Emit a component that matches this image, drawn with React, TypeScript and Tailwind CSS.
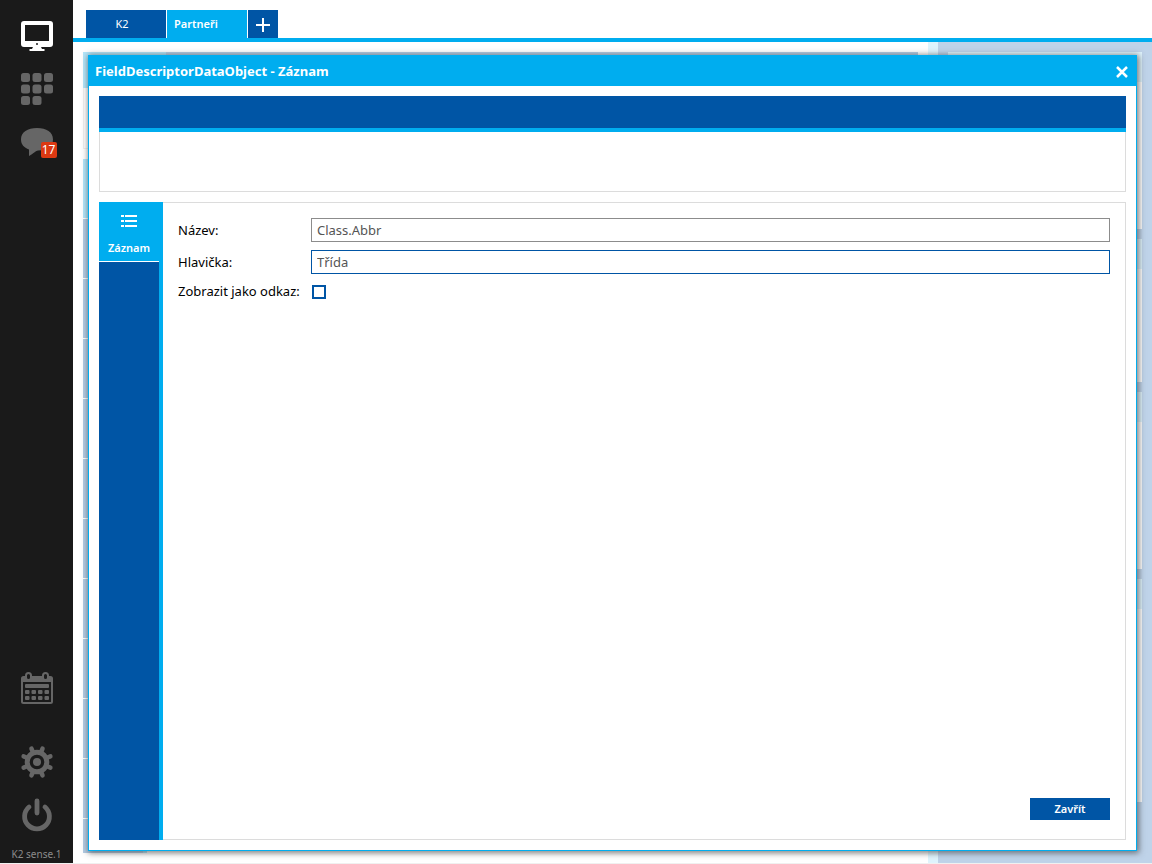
import { useState } from "react";

const LEFT_ROWS = 10;

function MonitorIcon() {
  return (
    <svg width="32" height="32" viewBox="0 0 32 32" fill="#fff" aria-hidden="true">
      <path fillRule="evenodd" d="M3 1h26a3 3 0 0 1 3 3v20a3 3 0 0 1-3 3h-9l1 2h2.500v2H8.500v-2H11l1-2H3a3 3 0 0 1-3-3V4a3 3 0 0 1 3-3zM4 5v16h24V5z" />
      <circle cx="16" cy="24" r="1" fill="#1a1a1a" />
    </svg>
  );
}

function GridIcon() {
  const cells = [[0, 0], [1, 0], [2, 0], [0, 1], [1, 1], [2, 1], [0, 2], [1, 2]];
  return (
    <svg width="32" height="32" viewBox="0 0 32 32" fill="#666" aria-hidden="true">
      {cells.map(([x, y]) => (
        <rect key={`${x}-${y}`} x={x * 11.5} y={y * 11.5} width="9" height="9" rx="2.500" />
      ))}
    </svg>
  );
}

function ChatIcon() {
  return (
    <svg width="32" height="32" viewBox="0 0 32 32" fill="#666" aria-hidden="true">
      <path d="M16 1c9.500 0 16 4 16 11.500S26 23 17 23.500c-2 .2-4 2.500-9 5.500v-6.500C3 20.500 0 17.500 0 12.500 0 5 6.500 1 16 1z" />
    </svg>
  );
}

function CalendarIcon() {
  return (
    <svg width="32" height="32" viewBox="0 0 32 32" aria-hidden="true">
      <rect x="1" y="5" width="30" height="26" rx="1.500" fill="none" stroke="#666" strokeWidth="2" />
      <path d="M1 5h30v5H1z" fill="#666" />
      <rect x="5" y="1" width="5" height="7" rx="2.500" fill="#1a1a1a" stroke="#666" strokeWidth="2" />
      <rect x="22" y="1" width="5" height="7" rx="2.500" fill="#1a1a1a" stroke="#666" strokeWidth="2" />
      <rect x="4" y="12" width="24" height="4" rx="1" fill="#666" />
      {[4, 10.5, 17, 23.5].map((x) => (
        <g key={x} fill="#666">
          <rect x={x} y="18" width="4.500" height="4" rx="1" />
          <rect x={x} y="24" width="4.500" height="4" rx="1" />
        </g>
      ))}
    </svg>
  );
}

function GearIcon() {
  return (
    <svg width="34" height="34" viewBox="-17 -17 34 34" aria-hidden="true">
      <circle r="9.800" fill="none" stroke="#666" strokeWidth="5" />
      <circle r="4" fill="#666" />
      {[22.5, 67.5, 112.5, 157.5, 202.5, 247.5, 292.5, 337.5].map((a) => (
        <path key={a} d="M0-11V-14.500" stroke="#666" strokeWidth="4.500" strokeLinecap="round" transform={`rotate(${a})`} />
      ))}
    </svg>
  );
}

function PowerIcon() {
  return (
    <svg width="32" height="34" viewBox="0 0 32 34" fill="none" stroke="#666" strokeWidth="4.800" strokeLinecap="round" aria-hidden="true">
      <path d="M16 3v12" />
      <path d="M8 9a12.400 12.400 0 1 0 16 0" />
    </svg>
  );
}

function Sidebar() {
  return (
    <aside className="flex w-[73px] shrink-0 flex-col items-center bg-[#1a1a1a] pt-5">
      <button aria-label="Desktop"><MonitorIcon /></button>
      <button aria-label="Apps" className="mt-[21px]"><GridIcon /></button>
      <button aria-label="Messages" className="relative mt-[22px]">
        <ChatIcon />
        <span className="absolute top-[15px] left-5 flex h-4 w-4 items-center justify-center rounded-xs bg-[#dc3912] text-xs text-white">17</span>
      </button>
      <div className="flex-1" />
      <button aria-label="Calendar"><CalendarIcon /></button>
      <button aria-label="Settings" className="mt-[41px]"><GearIcon /></button>
      <button aria-label="Power" className="mt-[19px]"><PowerIcon /></button>
      <div className="mt-[14px] h-[17px] text-[10px] leading-4 text-[#8c8c8c]">K2 sense.1</div>
    </aside>
  );
}

function TabBar() {
  return (
    <nav className="flex h-[42px] shrink-0 items-end gap-px border-b-4 border-[#00adef] pl-[13px] text-[11px] text-white">
      <button className="h-7 w-20 bg-[#0055a5] pt-px pr-2">K2</button>
      <button className="h-7 w-20 bg-[#00adef] pt-px pl-[7px] text-left font-semibold">Partneři</button>
      <button aria-label="Add tab" className="flex h-7 w-[30px] items-center justify-center bg-[#0055a5] pt-0.5">
        <svg width="14" height="14" viewBox="0 0 14 14" stroke="#fff" strokeWidth="2" aria-hidden="true">
          <path d="M7 0v14M0 7h14" />
        </svg>
      </button>
    </nav>
  );
}

// Dimmed page that stays visible around the dialog
function Backdrop() {
  return (
    <div className="flex flex-1" aria-hidden="true">
      <div className="flex flex-1 flex-col p-[10px]">
        <div className="flex h-9">
          <div className="w-[83px] bg-[#b3e6fa]" />
          <div className="flex-1 bg-[#b3cce4]" />
        </div>
        <div className="mb-[10px] h-[61px] border-b border-l border-[#f0f0f0]" />
        <div className="flex w-16 flex-1 flex-col border-r-4 border-[#b3e6fa]">
          <div className="h-[59px] bg-[#b3e6fa]" />
          {Array.from({ length: LEFT_ROWS }, (_, i) => (
            <div key={i} className="mt-px h-[59px] shrink-0 bg-[#b3cce4]" />
          ))}
          <div className="mt-px flex-1 bg-[#b3cce4]" />
        </div>
      </div>
      <div className="w-[10px] bg-[#dff4fd]" />
      <div className="flex w-[214px] flex-col gap-[10px] bg-[#bfd3e9] p-[10px] pb-[61px]">
        <div className="h-[177px] border-t-30 border-[#dff4fd] bg-white" />
        <div className="h-[143px] border-t-30 border-[#dff4fd] bg-white" />
        <div className="h-[177px] border-t-30 border-[#dff4fd] bg-white" />
        <div className="flex-1 border-t-30 border-[#dff4fd] bg-white" />
      </div>
    </div>
  );
}

function RecordForm() {
  const [name, setName] = useState("Class.Abbr");
  const [header, setHeader] = useState("Třída");
  const [asLink, setAsLink] = useState(false);

  return (
    <div className="flex flex-1 flex-col border border-l-0 border-[#dcdcdc] p-[15px] text-[13px] text-black">
      <div className="grid grid-cols-[133px_1fr] items-center gap-y-2">
        <label htmlFor="name" className="pt-0.5">Název:</label>
        <input
          id="name"
          className="h-6 border border-[#8c8c8c] bg-white px-[5px] text-[#555] outline-none"
          value={name}
          onChange={(e) => setName(e.target.value)}
        />
        <label htmlFor="header" className="pt-0.5">Hlavička:</label>
        <input
          id="header"
          className="h-6 border border-[#0055a5] bg-white px-[5px] text-[#555] outline-none"
          value={header}
          onChange={(e) => setHeader(e.target.value)}
        />
        <label htmlFor="link" className="whitespace-nowrap">Zobrazit jako odkaz:</label>
        <input
          id="link"
          type="checkbox"
          className="ml-px h-[14px] w-[14px] appearance-none border-2 border-[#0055a5] bg-white checked:bg-[#0055a5]"
          checked={asLink}
          onChange={(e) => setAsLink(e.target.checked)}
        />
      </div>
      <button className="mt-auto mb-1 h-[22px] w-20 self-end bg-[#0055a5] text-[11px] font-semibold text-white">Zavřít</button>
    </div>
  );
}

function RecordDialog() {
  return (
    <div role="dialog" aria-labelledby="dialog-title" className="absolute inset-x-[15px] top-[13px] bottom-3 flex flex-col border border-[#00adef] bg-white shadow-[1px_1px_6px_1px_rgba(70,70,70,0.7)]">
      <div className="flex h-[30px] shrink-0 items-center justify-between bg-[#00adef] pt-0.5 pr-[7px] pl-[6px] text-white">
        <h1 id="dialog-title" className="text-[13px] font-bold">FieldDescriptorDataObject - Záznam</h1>
        <button aria-label="Close">
          <svg width="14" height="14" viewBox="0 0 14 14" stroke="#fff" strokeWidth="2.500" aria-hidden="true">
            <path d="M2 2l10 10M12 2L2 12" />
          </svg>
        </button>
      </div>
      <div className="flex flex-1 flex-col gap-[10px] p-[10px]">
        <div>
          <div className="h-9 border-b-4 border-[#00adef] bg-[#0055a5]" />
          <div className="h-[60px] border border-t-0 border-[#dcdcdc]" />
        </div>
        <div className="flex flex-1">
          <div className="w-16 border-r-4 border-[#00adef] bg-[#0055a5]">
            <button className="flex h-[60px] w-full flex-col items-center border-b border-white bg-[#00adef] pt-[13px] text-[11px] font-semibold text-white">
              <svg width="16" height="12" viewBox="0 0 16 12" fill="#fff" aria-hidden="true">
                <path d="M0 0h3v2H0zM4 0h12v2H4zM0 5h3v2H0zM4 5h12v2H4zM0 10h3v2H0zM4 10h12v2H4z" />
              </svg>
              <span className="mt-[13px] leading-4">Záznam</span>
            </button>
          </div>
          <RecordForm />
        </div>
      </div>
    </div>
  );
}

export default function App() {
  return (
    <div className="flex h-screen flex-col border-b border-[#f0f0f0] bg-white font-['Noto_Sans',sans-serif]">
      <div className="flex min-h-0 flex-1">
        <Sidebar />
        <main className="flex min-w-0 flex-1 flex-col">
          <TabBar />
          <div className="relative flex flex-1 flex-col overflow-hidden">
            <Backdrop />
            <RecordDialog />
          </div>
        </main>
      </div>
    </div>
  );
}
